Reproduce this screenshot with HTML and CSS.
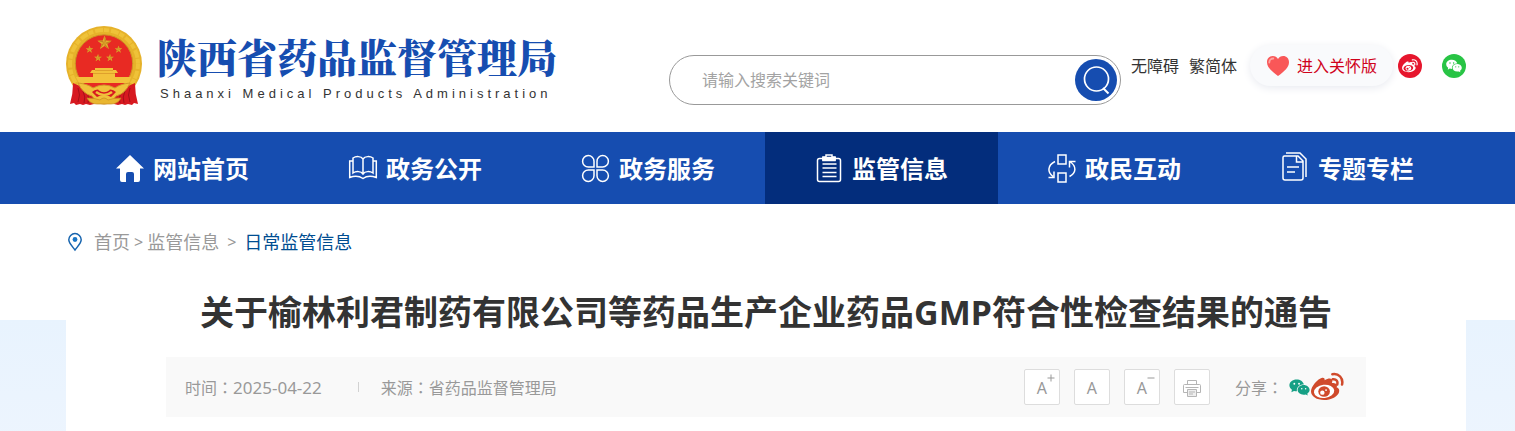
FILE: index.html
```html
<!DOCTYPE html>
<html lang="zh-CN">
<head>
<meta charset="utf-8">
<meta name="viewport" content="width=device-width, initial-scale=1">
<title>陕西省药品监督管理局</title>
<link rel="stylesheet" href="styles.css">
</head>
<body>
<svg class="defs" aria-hidden="true">
  <symbol id="weibo" viewBox="0 0 34 30">
    <path d="M14 8c4-2.500 8-2.500 8 .5 0 1-.5 2-.5 2.500 4 0 6 1.500 5 4.500 3 .8 3 3.500 2 6C26.500 25 21 28.500 13.500 28.500 6 28.500 0 25 0 19.500 0 14.500 7 6.500 11.500 5.500c2-.4 3 1 2.500 2.500z" fill="currentColor"/>
    <ellipse class="eye" cx="13.500" cy="19.500" rx="10.500" ry="6.800" transform="rotate(-6 13.500 19.500)"/>
    <ellipse cx="13.500" cy="19.700" rx="6" ry="5.400" fill="currentColor"/>
    <circle class="eye" cx="11.700" cy="20.800" r="2.300"/><circle class="eye" cx="15.500" cy="18.200" r="1"/>
    <path d="M22.500 7c3.500-.5 5.500 2 4.500 5.500M22 1.800c6.500-1.200 11.500 4 10 10.700" fill="none" stroke="currentColor" stroke-width="2.600" stroke-linecap="round"/>
  </symbol>
  <symbol id="wechat" viewBox="0 0 22 18">
    <path d="M8 .5C3.600.5.300 3.200.300 6.700c0 2 1 3.600 2.700 4.800L2.400 14l2.800-1.400c1 .3 2 .4 3.100.4C7.500 8.500 11 5.600 15.600 5.700 14.800 2.600 11.700.5 8 .5z" fill="currentColor"/>
    <path d="M21.700 11.500c0-2.900-2.900-5.200-6.300-5.200-3.600 0-6.400 2.300-6.400 5.200s2.800 5.200 6.400 5.200c.8 0 1.500-.1 2.200-.3l2.200 1.200-.6-2c1.500-1 2.500-2.400 2.500-4.100z" fill="currentColor"/>
    <g class="eye"><circle cx="5.500" cy="5" r="1"/><circle cx="10.500" cy="5" r="1"/><circle cx="13.400" cy="10.200" r=".8"/><circle cx="17.500" cy="10.200" r=".8"/></g>
  </symbol>
  <symbol id="star" viewBox="-10 -10 20 20">
    <path d="M0-10 2.400-3.200 9.500-3.100 3.800 1.200 5.900 8.100 0 4-5.900 8.100-3.800 1.200-9.500-3.100-2.400-3.200z" fill="#e5b02f"/>
    <path d="M0-10V0L2.400-3.200zM9.500-3.100 0 0 3.800 1.200zM5.900 8.100 0 0V4zM-5.900 8.100 0 0-3.800 1.200zM-9.500-3.100 0 0-2.400-3.200z" fill="#c58520"/>
  </symbol>
</svg>

<header class="header wrap">
  <a class="logo" href="#">
    <svg class="emblem" viewBox="0 0 76 80" aria-hidden="true">
      <circle cx="38" cy="38" r="38" fill="#e6b22a"/>
      <circle cx="38" cy="38" r="34" fill="none" stroke="#efc238" stroke-width="4" stroke-dasharray="5 2 8 1"/>
      <circle cx="38" cy="37.500" r="28.700" fill="#e82a23" stroke="#cf9424"/>
      <use href="#star" x="31" y="9.500" width="15" height="15"/>
      <use href="#star" x="19.500" y="19.500" width="8" height="8"/>
      <use href="#star" x="48.500" y="19.500" width="8" height="8"/>
      <use href="#star" x="28" y="28" width="8" height="8"/>
      <use href="#star" x="40" y="28" width="8" height="8"/>
      <path d="M29 42h18v2h3l2 3h-3v4h16l-2 6H13l-3-6h17v-4h-3l2-3h3z" fill="#f3c13b"/>
      <path d="M27 47.500h22M29 44.500h18" stroke="#dfa02c" fill="none"/>
      <path d="M7 57q8 3 13 7 5 4 8 6v8l-4 1-4-1-3 1-3-1-4 1-2-2-4 1q3-10 3-20zM69 57q-8 3-13 7-5 4-8 6v8l4 1 4-1 3 1 3-1 4 1 2-2 4 1q-3-10-3-20z" fill="#d71920"/>
      <path d="M12 62q3 7 0 14M17 65q3 6 1 12M22 69q1 5 0 8M64 62q-3 7 0 14M59 65q-3 6-1 12M54 69q-1 5 0 8" fill="none" stroke="#a51018"/>
      <path d="M12 57q10 1 15 5 11-6 22 0 5-4 15-5-5 11-14 13-5 8-12 8t-12-8q-9-2-14-13z" fill="#f0c13b" stroke="#d3982a"/>
      <path d="M26 66q5-5 12 0 7-5 12 0l-5 5q-7-4-14 0z" fill="#d71920"/>
      <path d="M30 66q8 6 16 0M33 63q5 4 10 0" fill="none" stroke="#f0c13b" stroke-width="2.500"/>
      <path d="M21 72q8 0 13 2 4-4 8 0 5-2 13-2-3 6-10 6H31q-7 0-10-6z" fill="#e9b630" stroke="#c98a20" stroke-width=".7"/>
    </svg>
    <span class="brand"><strong class="brand-name">陕西省药品监督管理局</strong><span class="brand-en">Shaanxi Medical Products Administration</span></span>
  </a>
  <form class="search" role="search">
    <input class="search-input" type="text" placeholder="请输入搜索关键词" aria-label="请输入搜索关键词">
    <button class="search-button" type="button" aria-label="搜索">
      <svg viewBox="0 0 42 42" fill="none" stroke="#fff" stroke-width="1.700"><circle cx="21.500" cy="20" r="12"/><path d="m28 29 5.500 5.500" stroke-width="2"/></svg>
    </button>
  </form>
  <div class="tools">
    <a class="tool" href="#">无障碍</a>
    <a class="tool" href="#">繁简体</a>
    <a class="care" href="#">
      <svg class="heart" viewBox="0 0 22 20" aria-hidden="true"><path d="M11 20C5 15.500 0 11.500 0 6.200 0 2.500 2.500 0 5.800 0 8 0 10 1.200 11 3c1-1.800 3-3 5.200-3C19.500 0 22 2.500 22 6.200 22 11.500 17 15.500 11 20z" fill="#f95758"/><path d="M2.300 6.500c0-2.500 1.500-4 4-4" fill="none" stroke="#fda4a1" stroke-width="1.800" stroke-linecap="round"/></svg>
      <span>进入关怀版</span>
    </a>
    <a class="social social-weibo" href="#" aria-label="微博"><svg class="social-icon"><use href="#weibo"/></svg></a>
    <a class="social social-wechat" href="#" aria-label="微信"><svg class="social-icon"><use href="#wechat"/></svg></a>
  </div>
</header>

<nav class="nav">
  <div class="nav-list">
    <a class="nav-item" href="#"><svg class="nav-icon" viewBox="0 0 28 28"><path d="M14 0 28 13.500h-4V25q0 2-2 2h-4v-8q0-2-2-2h-4q-2 0-2 2v8H6q-2 0-2-2V13.500H0z" fill="#fff"/></svg>网站首页</a>
    <a class="nav-item" href="#"><svg class="nav-icon line" viewBox="0 0 28 28"><path d="M14 4v15M14 4c-2-3-7-3-10-1v15c3-2 8-2 10 1 2-3 7-3 10-1V3c-3-2-8-2-10 1M4 6H.7v16.500c5-2 9-2 13.300 1 4-3 8-3 13.300-1V6H24"/></svg>政务公开</a>
    <a class="nav-item" href="#"><svg class="nav-icon line" viewBox="0 0 28 28"><path d="M12 12H6.500A5.700 5.700 0 1 1 12 6.300zM15 12V6.300A5.700 5.700 0 1 1 20.700 12zM12 15H6.500a5.700 5.700 0 1 0 5.500 5.700zM15 15v5.700a5.700 5.700 0 1 0 5.700-5.700z"/></svg>政务服务</a>
    <a class="nav-item active" href="#" aria-current="page"><svg class="nav-icon line" viewBox="0 0 28 28"><path d="M8 3.500H4.500q-2 0-2 2v19q0 2 2 2h19q2 0 2-2v-19q0-2-2-2H20M7.500 9h14M7.500 13h14M7.500 17.500h14M7.500 21.500h14"/><path d="M8 5V2h3V0h6v2h3v3z"/><path d="M8 2.500h12v3H8z" fill="#fff"/></svg>监管信息</a>
    <a class="nav-item" href="#"><svg class="nav-icon line" viewBox="0 0 28 28"><path d="M10 0h8v9h-8zM10 18h8v9h-8zM7 6.500C-1 10.500-.5 17.500 5 21.500M.5 22.500H6v-6M21.500 21.500c7-4 7-10 1-14.500M27.500 6.500h-6v6"/></svg>政民互动</a>
    <a class="nav-item" href="#"><svg class="nav-icon line" viewBox="0 0 28 28"><path d="M2 2.500Q2 1 3.500 1H17l5 5v17q0 2-2 2H4q-2 0-2-2zM15.500 1v6H22M6 12h12M6 17h8M5-2h14l6 6v18"/></svg>专题专栏</a>
  </div>
</nav>

<main class="main">
  <div class="content">
    <nav class="crumbs" aria-label="当前位置">
      <svg class="pin" viewBox="0 0 14 18" fill="none"><path d="M7 17C4 13 .8 10 .8 6.800a6.200 6.200 0 0 1 12.400 0C13.200 10 10 13 7 17z" stroke="#1764ae" stroke-width="1.500"/><circle cx="7" cy="6.500" r="2.400" fill="#1975c5"/></svg>
      <a href="#">首页</a><span class="sep">&gt;</span><a href="#">监管信息</a><span class="sep wide">&gt;</span><a class="current" href="#">日常监管信息</a>
    </nav>
    <h1 class="title">关于榆林利君制药有限公司等药品生产企业药品GMP符合性检查结果的通告</h1>
    <div class="meta">
      <span>时间<span class="colon" lang="zh-Hant">：</span><time class="date">2025-04-22</time></span>
      <span class="rule"></span>
      <span>来源<span class="colon" lang="zh-Hant">：</span>省药品监督管理局</span>
      <div class="actions">
        <button class="action" type="button" aria-label="放大字体">A<svg class="mark" viewBox="0 0 8 8"><path d="M4 .5v7M.5 4h7"/></svg></button>
        <button class="action" type="button" aria-label="默认字体">A</button>
        <button class="action" type="button" aria-label="缩小字体">A<svg class="mark" viewBox="0 0 8 8"><path d="M.5 4h7"/></svg></button>
        <button class="action" type="button" aria-label="打印"><svg class="printer" viewBox="0 0 18 17" fill="none" stroke="#b5b5b5"><path d="M4.500 5V.5h9V5M4 12.500H.5V5.500q0-1 1-1h15q1 0 1 1v7H14"/><path d="M4.500 9.500h9v7h-9z" fill="#eee"/><path d="M6 12h6M6 14h4M2.500 7.500h13"/></svg></button>
      </div>
      <div class="share">
        <span>分享<span class="colon" lang="zh-Hant">：</span></span>
        <a class="share-wechat" href="#" aria-label="分享到微信"><svg><use href="#wechat"/></svg></a>
        <a class="share-weibo" href="#" aria-label="分享到微博"><svg><use href="#weibo"/></svg></a>
      </div>
    </div>
  </div>
</main>
</body>
</html>
```
FILE: styles.css
```css
* { box-sizing: border-box; }
body {
  margin: 0;
  background: #fff;
  color: #333;
  font: 16px/24px "Noto Sans", "Noto Sans CJK SC", sans-serif;
}
a { color: inherit; text-decoration: none; }
svg { display: block; flex: none; overflow: visible; }
button { font: inherit; cursor: pointer; }
.defs { position: absolute; width: 0; height: 0; }
.eye { fill: var(--eye, #fff); }
.wrap { padding-left: 66px; padding-right: 49px; }

.header {
  display: flex;
  align-items: flex-start;
  padding-top: 26px;
  padding-bottom: 26px;
}
.logo { display: flex; gap: 15px; height: 80px; }
.emblem { width: 76px; height: 80px; }
.brand { display: flex; flex-direction: column; white-space: nowrap; }
.brand-name {
  color: #164db0;
  font: 900 40px/60px "Noto Serif CJK SC", "Noto Sans CJK SC", serif;
}
.brand-en {
  padding-left: 3px;
  font: 13px/16px "Liberation Sans", sans-serif;
  letter-spacing: 4px;
}
.search {
  display: flex;
  align-items: center;
  width: 452px;
  height: 50px;
  margin: 29px 10px 0 auto;
  padding: 0 3px 0 32px;
  border: 1px solid #999;
  border-radius: 25px;
}
.search-input {
  flex: 1;
  min-width: 0;
  padding: 0;
  border: 0;
  outline: 0;
  background: none;
  font: inherit;
}
.search-input::placeholder { color: #a3a3a3; opacity: 1; }
.search-button {
  width: 42px;
  height: 42px;
  padding: 0;
  border: 0;
  border-radius: 50%;
  background: #164db0;
}
.tools { display: flex; align-items: center; height: 41px; margin-top: 19px; white-space: nowrap; }
.tool { margin-right: 10px; }
.care {
  display: flex;
  align-items: center;
  gap: 8px;
  height: 41px;
  margin: 0 5px 0 3px;
  padding: 0 16px 0 17px;
  border-radius: 21px;
  background: #f9fafc;
  box-shadow: 0 2px 8px #e8eaf0;
  color: #d0021b;
}
.heart { width: 22px; height: 20px; }
.social { display: grid; place-items: center; width: 24px; height: 24px; border-radius: 50%; color: #fff; }
.social-icon { width: 16px; height: 14px; }
.social-weibo { --eye: #e6162d; margin-right: 20px; background: #e6162d; }
.social-wechat { --eye: #28c445; background: #28c445; }

.nav { background: #164db0; }
.nav-list { display: flex; padding: 0 51px 0 66px; }
.nav-item {
  display: flex;
  flex: 1;
  align-items: center;
  justify-content: center;
  gap: 9px;
  height: 72px;
  padding-top: 2px;
  color: #fff;
  font-size: 24px;
  font-weight: 700;
  white-space: nowrap;
}
.nav-item.active { background: #032d7c; }
.nav-icon { width: 28px; height: 28px; }
.line { fill: none; stroke: #fff; stroke-width: 1.5px; }

.main {
  min-height: calc(100vh - 204px);
  padding: 0 49px 0 66px;
  background: linear-gradient(#e8f3fe, #f1f6fe) 0 116px no-repeat;
}
.content { padding: 0 100px 14px; background: #fff; }
.crumbs { display: flex; align-items: center; height: 76px; margin: 0 -98px; color: #999; font-size: 18px; }
.pin { width: 14px; height: 18px; margin-right: 12px; }
.sep { margin: 0 4px; font-size: 16px; }
.sep.wide { margin: 0 8px; }
.current { color: #004d91; }
.title { margin: 0 0 13px; font-size: 34px; line-height: 64px; text-align: center; }
.meta {
  display: flex;
  align-items: center;
  min-height: 60px;
  padding: 0 22px 0 19px;
  background: #f9f9f9;
  color: #999;
}
.colon { font-family: "Noto Sans CJK TC", sans-serif; }
.date { font-size: 17px; }
.rule { width: 1px; height: 10px; margin: 0 22px 0 36px; background: #d2d2d2; }
.actions { display: flex; gap: 14px; margin-left: auto; }
.action {
  position: relative;
  display: grid;
  place-items: center;
  width: 36px;
  height: 36px;
  padding: 2px 0 0;
  border: 1px solid #ddd;
  border-radius: 2px;
  background: #fff;
  color: #999;
}
.mark { position: absolute; top: 4px; right: 4px; width: 8px; height: 8px; stroke: #999; }
.printer { width: 18px; height: 17px; }
.share { display: flex; align-items: center; margin-left: 25px; }
.share-wechat { margin-left: 6px; color: #16a085; }
.share-wechat svg { width: 21px; height: 17px; }
.share-weibo { margin-left: 1px; color: #d04a2b; }
.share-weibo svg { width: 33px; height: 30px; }
```
